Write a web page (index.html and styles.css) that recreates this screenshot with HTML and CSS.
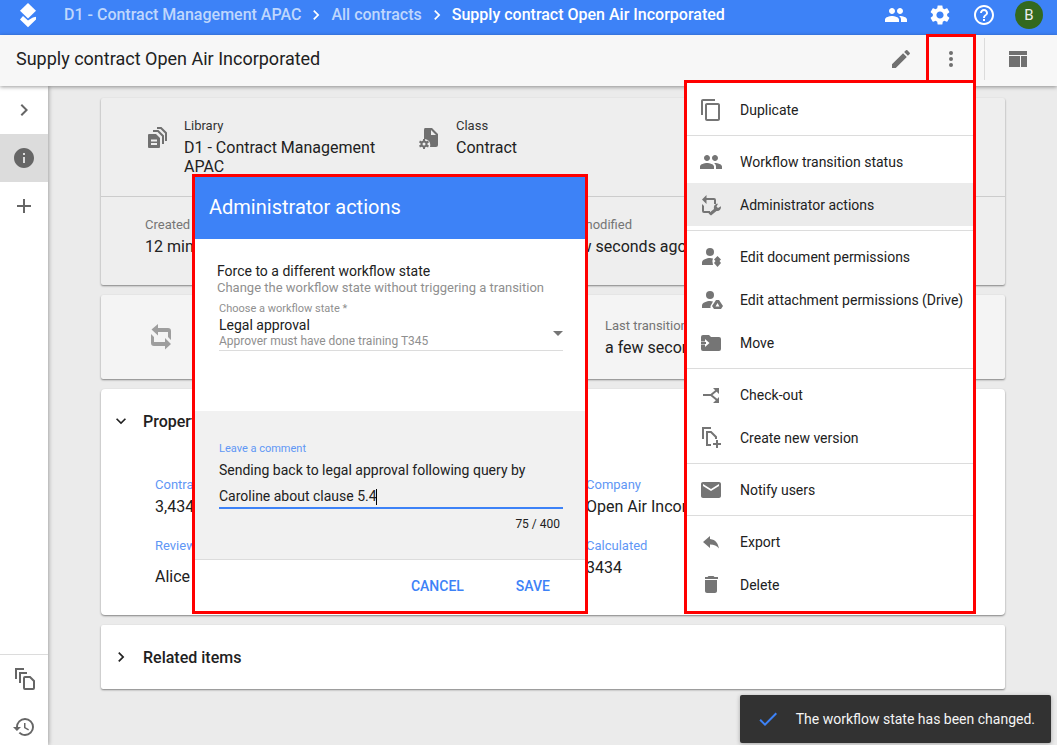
FILE: index.html
```
<!DOCTYPE html>
<html lang="en">
<head>
    <meta charset="UTF-8">
    <meta name="viewport" content="width=device-width, initial-scale=1.0">
    <title>Supply contract Open Air Incorporated</title>
    <link rel="stylesheet" href="styles.css">
</head>
<body>
    <!-- Shared icons -->
    <svg class="icon-defs" aria-hidden="true">
        <symbol id="i-people" viewBox="0 0 24 24"><path d="M16 11c1.660 0 2.990-1.340 2.990-3S17.660 5 16 5s-3 1.340-3 3 1.340 3 3 3zm-8 0c1.660 0 2.990-1.340 2.990-3S9.660 5 8 5 5 6.340 5 8s1.340 3 3 3zm0 2c-2.330 0-7 1.170-7 3.500V19h14v-2.500c0-2.330-4.670-3.500-7-3.500zm8 0c-.29 0-.62.02-.97.05 1.160.84 1.970 1.970 1.970 3.450V19h6v-2.500c0-2.330-4.670-3.500-7-3.500z"/></symbol>
        <symbol id="i-right" viewBox="0 0 24 24"><path d="M10 6 8.590 7.410 13.170 12l-4.580 4.590L10 18l6-6z"/></symbol>
        <symbol id="i-down" viewBox="0 0 24 24"><path d="M7.410 8.590 12 13.170l4.590-4.580L18 10l-6 6-6-6z"/></symbol>
    </svg>

    <div class="app">
        <header class="topbar">
            <a href="#" class="logo" aria-label="Home">
                <svg viewBox="0 0 20 26" width="20" height="26"><path d="M10 1l8 7.700-8 7.700-8-7.700z"/><path d="M5 14l5 4.500c2-1 4-3 7-3.500.6-.2.600-.5 1-.3v2.900l-8 7.600-8-7.800z"/></svg>
            </a>
            <nav class="breadcrumb">
                <a href="#">D1 - Contract Management APAC</a>
                <svg width="20" height="20"><use href="#i-right"/></svg>
                <a href="#">All contracts</a>
                <svg width="20" height="20"><use href="#i-right"/></svg>
                <a href="#" class="current">Supply contract Open Air Incorporated</a>
            </nav>
            <div class="top-actions">
                <button aria-label="People"><svg width="24" height="24"><use href="#i-people"/></svg></button>
                <button aria-label="Settings"><svg width="24" height="24" viewBox="0 0 24 24"><path d="M19.140 12.940c.04-.3.060-.61.060-.94 0-.32-.02-.64-.07-.94l2.030-1.580c.18-.14.230-.41.120-.61l-1.920-3.320c-.12-.22-.37-.29-.59-.22l-2.390.96c-.5-.38-1.030-.7-1.620-.94l-.36-2.540c-.04-.24-.24-.41-.48-.41h-3.840c-.24 0-.43.170-.47.410l-.36 2.540c-.59.240-1.130.570-1.620.940l-2.390-.96c-.22-.08-.47 0-.59.220L2.740 8.870c-.12.210-.08.470.120.610l2.030 1.580c-.05.300-.09.630-.09.940s.02.640.070.940l-2.030 1.580c-.18.140-.23.410-.12.610l1.920 3.320c.12.220.37.290.59.220l2.390-.96c.5.380 1.030.700 1.620.940l.36 2.540c.05.240.240.410.480.410h3.840c.24 0 .44-.17.470-.41l.36-2.540c.59-.24 1.130-.56 1.620-.94l2.390.960c.22.080.47 0 .59-.22l1.920-3.320c.12-.22.070-.47-.12-.61l-2.010-1.580zM12 15.600c-1.980 0-3.600-1.620-3.600-3.600s1.620-3.600 3.600-3.600 3.600 1.620 3.600 3.600-1.620 3.600-3.600 3.600z"/></svg></button>
                <button aria-label="Help"><svg width="24" height="24" viewBox="0 0 24 24"><path d="M11 18h2v-2h-2v2zm1-16C6.480 2 2 6.480 2 12s4.480 10 10 10 10-4.480 10-10S17.520 2 12 2zm0 18c-4.410 0-8-3.590-8-8s3.590-8 8-8 8 3.590 8 8-3.590 8-8 8zm0-14c-2.210 0-4 1.790-4 4h2c0-1.100.9-2 2-2s2 .9 2 2c0 2-3 1.750-3 5h2c0-2.250 3-2.500 3-5 0-2.210-1.790-4-4-4z"/></svg></button>
                <button class="avatar">B</button>
            </div>
        </header>

        <div class="toolbar">
            <h1>Supply contract Open Air Incorporated</h1>
            <button class="tool" aria-label="Edit"><svg width="24" height="24" viewBox="0 0 24 24"><path d="M3 17.250V21h3.750L17.810 9.940l-3.750-3.750L3 17.250zM20.710 7.040c.39-.39.390-1.020 0-1.410l-2.340-2.340a.996.996 0 0 0-1.410 0l-1.830 1.830 3.750 3.750 1.830-1.830z"/></svg></button>
            <button class="tool kebab" aria-label="More"><svg width="24" height="24" viewBox="0 0 24 24"><circle cx="12" cy="6" r="2"/><circle cx="12" cy="12" r="2"/><circle cx="12" cy="18" r="2"/></svg></button>
            <button class="tool view" aria-label="Layout"><svg width="18" height="16" viewBox="0 0 18 16"><path d="M0 0h18v4H0zM0 5h11v11H0zM12 5h6v11h-6z"/></svg></button>
        </div>

        <div class="main">
            <!-- Left rail -->
            <aside class="rail">
                <button aria-label="Expand"><svg width="24" height="24"><use href="#i-right"/></svg></button>
                <button class="active" aria-label="Info"><svg width="24" height="24" viewBox="0 0 24 24"><path d="M12 2C6.480 2 2 6.480 2 12s4.480 10 10 10 10-4.480 10-10S17.520 2 12 2zm1 15h-2v-6h2v6zm0-8h-2V7h2v2z"/></svg></button>
                <button aria-label="Add"><svg width="24" height="24" viewBox="0 0 24 24"><path d="M19 13h-6v6h-2v-6H5v-2h6V5h2v6h6v2z"/></svg></button>
                <div class="rail-bottom">
                    <button aria-label="Versions"><svg width="24" height="24" viewBox="0 0 24 24" class="line"><path d="M4 12V2h8M8 16V6h7M12 11q0-1 1-1h5l4 4v7q0 1-1 1h-8q-1 0-1-1z"/></svg></button>
                    <button aria-label="History"><svg width="24" height="24" viewBox="0 0 24 24"><path d="M13 3a9 9 0 0 0-9 9H1l3.890 3.890.07.14L9 12H6c0-3.870 3.130-7 7-7s7 3.130 7 7-3.130 7-7 7c-1.930 0-3.680-.79-4.940-2.060l-1.420 1.420A8.954 8.954 0 0 0 13 21a9 9 0 0 0 0-18zm-1 5v5l4.280 2.540.72-1.210-3.500-2.080V8H12z"/></svg></button>
                </div>
            </aside>

            <main class="content">
                <section class="card summary">
                    <div class="row head-row">
                        <div class="item">
                            <svg width="24" height="24" viewBox="0 0 24 24"><path d="M4 8h7l4 4v9q0 1-1 1H4q-1 0-1-1V9q0-1 1-1z"/><path class="cut" d="M6 14.500h6M6 18h6"/><path class="stroke" d="M8 5h5l5 5v8M12 2h4l5 5v8"/></svg>
                            <div>
                                <div class="label dark">Library</div>
                                <div class="value">D1 - Contract Management APAC</div>
                            </div>
                        </div>
                        <div class="item">
                            <svg width="24" height="24" viewBox="0 0 24 24"><path d="M8 2h7l6 6v11q0 2-2 2h-6c1-4-1-8-6-8V4q0-2 1-2z"/><path class="hole" d="M14 4v5h5z"/><circle class="stroke" cx="7" cy="18" r="2.500"/><path class="stroke" d="M7 13v2M7 21v2M2.500 15.500l2 1M9.500 19.500l2 1M11.500 15.500l-2 1M4.500 19.500l-2 1"/></svg>
                            <div>
                                <div class="label dark">Class</div>
                                <div class="value">Contract</div>
                            </div>
                        </div>
                    </div>
                    <div class="row dates">
                        <div>
                            <div class="label">Created</div>
                            <div class="value">12 minutes ago</div>
                        </div>
                        <div>
                            <div class="label">Last modified</div>
                            <div class="value">a few seconds ago</div>
                        </div>
                    </div>
                </section>

                <section class="card workflow">
                    <svg width="28" height="28" viewBox="0 0 28 28"><path d="M4.500 6.500L11 1v4h10q3 0 3 3v9l-3-3V9H11v3.500zM4 11l3 3v5h11v-4l6 6-6 5.500V23H7q-3 0-3-3z"/></svg>
                    <div>
                        <div class="label">Last transition</div>
                        <div class="value">a few seconds ago</div>
                    </div>
                </section>

                <section class="card properties">
                    <h2><svg width="20" height="20"><use href="#i-down"/></svg>Properties</h2>
                    <div class="fields">
                        <div>
                            <div class="label link">Contract value</div>
                            <div class="value">3,434</div>
                        </div>
                        <div>
                            <div class="label link">Company</div>
                            <div class="value">Open Air Incorporated</div>
                        </div>
                        <div>
                            <div class="label link">Reviewer</div>
                            <div class="value person">Alice</div>
                        </div>
                        <div>
                            <div class="label link">Calculated</div>
                            <div class="value">3434</div>
                        </div>
                    </div>
                </section>

                <section class="card">
                    <h2><svg width="20" height="20"><use href="#i-right"/></svg>Related items</h2>
                </section>
            </main>
        </div>

        <!-- Document menu -->
        <div class="menu">
            <button><svg width="24" height="24" viewBox="0 0 24 24"><path d="M16 1H4c-1.100 0-2 .9-2 2v14h2V3h12V1zm3 4H8c-1.100 0-2 .9-2 2v14c0 1.100.9 2 2 2h11c1.100 0 2-.9 2-2V7c0-1.100-.9-2-2-2zm0 16H8V7h11v14z"/></svg>Duplicate</button>
            <hr>
            <button><svg width="24" height="24"><use href="#i-people"/></svg>Workflow transition status</button>
            <button class="selected"><svg width="24" height="24" viewBox="0 0 24 24"><path d="M3 6.500L7.500 2v3H15q2 0 2 2v4h-2V7H7.500v4zM3 11l2 2v5h6v2H5q-2 0-2-2z"/><path d="M9.500 20.500l5.500-4.500c-.6-3 1-5.500 4-5.300l-1.500 2.800 1.500 1.500 3-1.700c.3 3.500-2 5.200-4.500 4.700L12 22.500z"/></svg>Administrator actions</button>
            <hr>
            <button><svg width="24" height="24" viewBox="0 0 24 24"><circle cx="11" cy="7" r="4"/><path d="M3 20v-2.500C3 14.500 8 13 11 13q2 0 3 .4-1.500 2.600 0 6.600zM18.500 11l3.500 3.500-1.500 1.500 1.500 2-3.500 4-3.500-4 1.500-2-1.500-1.500z"/></svg>Edit document permissions</button>
            <button><svg width="24" height="24" viewBox="0 0 24 24"><circle cx="11" cy="7" r="4"/><path d="M3 20v-2.500C3 14.500 8 13 11 13q1.500 0 3 .4L11.500 18v2zM17 12h3l4 6-2 3h-7l-2-3z"/><path class="hole" d="M18.500 15l-2 3.500h4z"/></svg>Edit attachment permissions (Drive)</button>
            <button><svg width="24" height="24" viewBox="0 0 24 24"><path d="M20 6h-8l-2-2H4q-2 0-2 2v4.500h4V8l4.500 4L6 16v-2.500H2V18q0 2 2 2h16q2 0 2-2V8q0-2-2-2z"/><path d="M2 11h5v2H2z"/></svg>Move</button>
            <hr>
            <button><svg width="24" height="24" viewBox="0 0 24 24"><path class="stroke" d="M4 12h8l6-5M12 12l6 5"/><path d="M14 5h6v6zM20 14v6h-6z"/></svg>Check-out</button>
            <button><svg width="24" height="24" viewBox="0 0 24 24"><path class="stroke" d="M4 13V2h8M12 19H8V6h4l5 5v2M18 14v8M14 18h8"/></svg>Create new version</button>
            <hr>
            <button><svg width="24" height="24" viewBox="0 0 24 24"><path d="M20 4H4c-1.100 0-1.990.9-1.990 2L2 18c0 1.100.9 2 2 2h16c1.100 0 2-.9 2-2V6c0-1.100-.9-2-2-2zm0 4-8 5-8-5V6l8 5 8-5v2z"/></svg>Notify users</button>
            <hr>
            <button><svg width="24" height="24" viewBox="0 0 24 24"><path d="M11 9V6l-7 6 7 6v-3.500c4 0 7 1.300 9 4.100-1-5-3-9-9-9.600z"/></svg>Export</button>
            <button><svg width="24" height="24" viewBox="0 0 24 24"><path d="M6 18c0 1.100.9 2 2 2h8c1.100 0 2-.9 2-2V7H6v11zM19 4h-3.500l-1-1h-5l-1 1H6v2h13V4z"/></svg>Delete</button>
        </div>

        <!-- Administrator actions dialog -->
        <form class="dialog">
            <h3>Administrator actions</h3>
            <div class="dialog-body">
                <h4>Force to a different workflow state</h4>
                <p>Change the workflow state without triggering a transition</p>
                <div class="field select-field">
                    <label for="state">Choose a workflow state *</label>
                    <div class="select-wrap">
                        <select id="state">
                            <option>Legal approval</option>
                        </select>
                        <svg width="10" height="5" viewBox="0 0 10 5"><path d="M0 0h10L5 5z"/></svg>
                    </div>
                    <small>Approver must have done training T345</small>
                </div>
            </div>
            <div class="dialog-comment">
                <div class="field">
                    <label for="comment" class="link">Leave a comment</label>
                    <textarea id="comment" rows="2" spellcheck="false">Sending back to legal approval following query by Caroline about clause 5.4</textarea>
                    <span class="caret"></span>
                </div>
                <div class="counter">75 / 400</div>
            </div>
            <div class="dialog-actions">
                <button type="button">CANCEL</button>
                <button type="button">SAVE</button>
            </div>
        </form>

        <div class="toast" role="status">
            <svg width="24" height="24" viewBox="0 0 24 24"><path d="M9 16.170 4.830 12l-1.420 1.410L9 19 21 7l-1.410-1.410z"/></svg>
            <span>The workflow state has been changed.</span>
        </div>
    </div>
</body>
</html>
```
FILE: styles.css
```
* {
    margin: 0;
    padding: 0;
    box-sizing: border-box;
}

body {
    font-family: Roboto, "Liberation Sans", sans-serif;
    font-size: 16px;
    color: #212121;
    background-color: #ebebeb;
}

button,
select,
textarea {
    font: inherit;
    color: inherit;
    border: none;
    background: none;
}

button {
    cursor: pointer;
}

a {
    color: inherit;
    text-decoration: none;
}

svg {
    display: block;
    flex-shrink: 0;
    fill: currentColor;
}

.icon-defs {
    position: absolute;
    width: 0;
    height: 0;
}

.stroke,
.line {
    fill: none;
    stroke: currentColor;
    stroke-width: 2;
}

.cut {
    fill: none;
    stroke: #eee;
    stroke-width: 2;
}

.hole {
    fill: #fff;
}

.app {
    position: relative;
    display: flex;
    flex-direction: column;
    height: 100vh;
    overflow: hidden;
}

/* Top bar */
.topbar {
    display: flex;
    align-items: center;
    height: 35px;
    padding: 0 14px 6px 18px;
    background-color: #3d82f7;
    color: #fff;
}

.breadcrumb {
    display: flex;
    align-items: center;
    flex: 1;
    gap: 5px;
    padding-left: 26px;
    font-weight: 500;
    white-space: nowrap;
}

.breadcrumb a {
    color: #bfd7fd;
}

.breadcrumb .current {
    color: #fff;
}

.top-actions {
    display: flex;
    align-items: center;
    gap: 20px;
}

.avatar {
    width: 28px;
    height: 28px;
    margin-left: -1px;
    border-radius: 50%;
    background-color: #33691e;
    color: #eee;
    font-size: 15px;
}

/* Title bar */
.toolbar {
    position: relative;
    display: flex;
    align-items: center;
    height: 51px;
    padding: 0 0 4px 16px;
    background-color: #f7f7f7;
    box-shadow: 0 1px 4px rgba(0, 0, 0, 0.4);
    z-index: 2;
}

.toolbar h1 {
    flex: 1;
    font-size: 18px;
    font-weight: 400;
}

.tool {
    display: flex;
    align-items: center;
    justify-content: center;
    width: 50px;
    height: 49px;
    color: #707070;
}

.kebab {
    border: 3px solid #f00;
}

.view {
    width: 73px;
    height: 42px;
    margin-left: 8px;
    border-left: 1px solid #dcdcdc;
    padding-right: 6px;
}

.main {
    display: flex;
    flex: 1;
    min-height: 0;
}

/* Left rail */
.rail {
    display: flex;
    flex-direction: column;
    width: 48px;
    background-color: #fff;
    color: #666;
    box-shadow: 1px 0 4px rgba(0, 0, 0, 0.3);
}

.rail button {
    display: flex;
    align-items: center;
    justify-content: center;
    width: 100%;
    height: 48px;
}

.rail .active {
    background-color: #dcdcdc;
}

.rail-bottom {
    margin-top: auto;
    margin-bottom: -6px;
    border-top: 1px solid #dcdcdc;
}

/* Cards */
.content {
    display: flex;
    flex-direction: column;
    flex: 1;
    gap: 10px;
    padding: 12px 52px 0 53px;
}

.card {
    background-color: #fff;
    border-radius: 2px;
    box-shadow: 0 1px 2px rgba(0, 0, 0, 0.45);
}

.summary {
    background-color: #eee;
}

.summary .hole {
    fill: #eee;
}

.label {
    font-size: 13px;
    line-height: 20px;
    color: #757575;
    white-space: nowrap;
}

.label.dark {
    color: #333;
}

.link,
.label.link {
    color: #5f97f5;
}

.value {
    margin-top: 2px;
    line-height: 19px;
}

.head-row {
    display: grid;
    grid-template-columns: repeat(3, 1fr);
    padding: 18px 44px 20px;
    border-bottom: 1px solid #ccc;
}

.item {
    display: flex;
    gap: 15px;
    padding-right: 28px;
}

.item svg {
    margin-top: 10px;
    color: #707070;
}

.dates {
    display: grid;
    grid-template-columns: repeat(2, 1fr);
    padding: 18px 44px 29px;
}

.workflow {
    display: grid;
    grid-template-columns: repeat(2, 1fr);
    align-items: center;
    padding: 21px 0 22px 46px;
    column-gap: 58px;
    background-color: #f4f4f4;
}

.workflow svg {
    color: #9e9e9e;
}

.card h2 {
    display: flex;
    align-items: center;
    gap: 12px;
    height: 64px;
    padding-left: 10px;
    font-size: 16px;
    font-weight: 500;
}

.properties {
    border-radius: 4px;
}

.fields {
    display: grid;
    grid-template-columns: repeat(2, 1fr);
    gap: 20px 32px;
    padding: 22px 20px 20px 54px;
}

.value.person {
    line-height: 37px;
}

/* Document menu */
.menu {
    position: absolute;
    top: 80px;
    right: 81px;
    width: 292px;
    padding: 5px 0;
    border: 3px solid #f00;
    background-color: #fff;
    z-index: 3;
}

.menu button {
    display: flex;
    align-items: center;
    gap: 17px;
    width: 100%;
    height: 43px;
    padding-left: 12px;
    font-size: 14px;
    text-align: left;
}

.menu svg {
    color: #757575;
}

.menu .selected {
    background-color: #ebebeb;
}

.menu hr {
    height: 1px;
    margin: 4px 0;
    border: none;
    background-color: #dcdcdc;
}

/* Dialog */
.dialog {
    position: absolute;
    top: 174px;
    left: 192px;
    width: 396px;
    border: 3px solid #f00;
    background-color: #fff;
    z-index: 3;
}

.dialog h3 {
    padding: 0 14px 2px;
    background-color: #3d82f7;
    color: #fff;
    font-size: 20px;
    font-weight: 400;
    line-height: 60px;
}

.dialog-body {
    padding: 24px 22px 60px;
}

.dialog h4 {
    font-size: 14px;
    font-weight: 400;
    line-height: 17px;
}

.dialog p {
    font-size: 13px;
    line-height: 16px;
    color: #8f8f8f;
}

.field {
    position: relative;
    margin-left: 2px;
}

.field label {
    display: block;
    font-size: 11px;
    line-height: 16px;
}

.select-field {
    margin-top: 5px;
    border-bottom: 1px solid #dcdcdc;
    color: #8f8f8f;
}

.select-wrap {
    display: flex;
    align-items: center;
    height: 16px;
}

.select-wrap select {
    flex: 1;
    appearance: none;
    color: #212121;
    font-size: 14px;
    line-height: 16px;
}

.select-wrap svg {
    margin-top: 16px;
    color: #757575;
}

.field small {
    display: block;
    font-size: 12px;
    line-height: 17px;
}

.dialog-comment {
    padding: 30px 22px 26px;
    border-bottom: 1px solid #dcdcdc;
    background-color: #f1f1f1;
}

.field textarea {
    display: block;
    width: 100%;
    height: 52px;
    border-bottom: 2px solid #3d82f7;
    outline: none;
    overflow: hidden;
    resize: none;
    font-size: 14px;
    line-height: 26px;
}

.caret {
    position: absolute;
    left: 157px;
    bottom: 4px;
    width: 1px;
    height: 16px;
    background-color: #000;
}

.counter {
    padding: 6px 3px 0 0;
    font-size: 12px;
    line-height: 18px;
    text-align: right;
}

.dialog-actions {
    display: flex;
    justify-content: flex-end;
    gap: 52px;
    padding: 0 35px;
}

.dialog-actions button {
    height: 51px;
    color: #3d82f7;
    font-size: 14px;
    font-weight: 500;
}

/* Toast */
.toast {
    position: absolute;
    right: 6px;
    bottom: 2px;
    display: flex;
    align-items: center;
    gap: 16px;
    height: 48px;
    padding: 0 16px;
    border-radius: 2px;
    background-color: #323232;
    color: #f5f5f5;
    font-size: 14px;
    box-shadow: 0 1px 4px rgba(0, 0, 0, 0.3);
    z-index: 4;
}

.toast svg {
    color: #3d82f7;
}
```
